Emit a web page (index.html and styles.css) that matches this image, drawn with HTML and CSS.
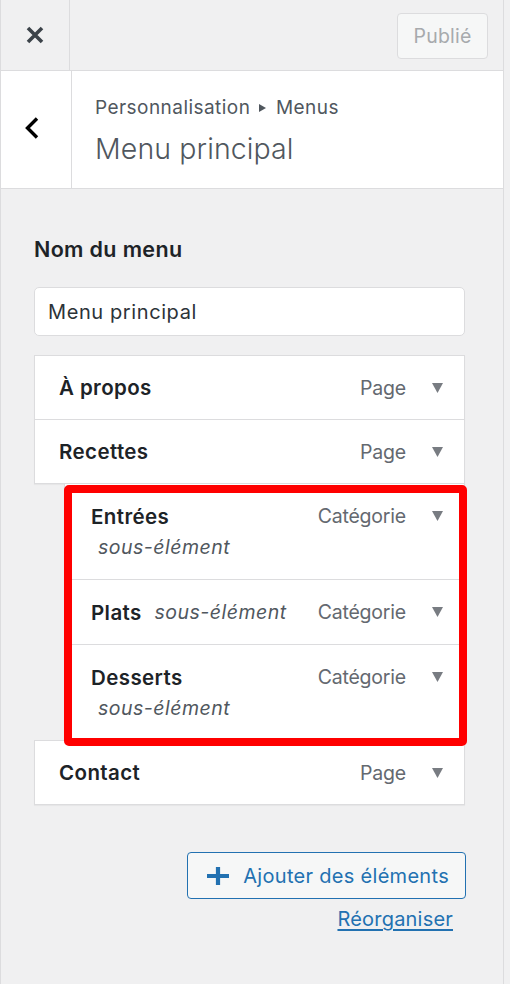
FILE: index.html
```html
<!DOCTYPE html>
<html lang="fr">
<head>
<meta charset="utf-8">
<title>Menu principal</title>
<link rel="stylesheet" href="styles.css">
</head>
<body>
<div class="panel">
  <div class="topbar">
    <button class="close" aria-label="Fermer">
      <svg width="18" height="18" viewBox="0 0 18 18"><path d="M2 2 L16 16 M16 2 L2 16" stroke="#3c434a" stroke-width="3.6" fill="none"/></svg>
    </button>
    <div class="spacer"></div>
    <button class="publish" disabled>Publié</button>
  </div>
  <div class="section-head">
    <button class="back" aria-label="Retour">
      <svg width="16" height="22" viewBox="0 0 16 22"><polyline points="13,1.5 3.5,11 13,20.5" stroke="#000" stroke-width="3.4" fill="none" stroke-linejoin="miter"/></svg>
    </button>
    <div class="titles">
      <div class="crumb">Personnalisation <svg class="crumb-arrow" width="7" height="8" viewBox="0 0 7 8"><path d="M0 0 L7 4 L0 8Z" fill="#50575e"/></svg> Menus</div>
      <h1 class="title">Menu principal</h1>
    </div>
  </div>
  <div class="content">
    <label class="label" for="menu-name">Nom du menu</label>
    <input id="menu-name" class="name-input" type="text" value="Menu principal">
    <ul class="menu-items">
      <li class="item">
        <span class="item-title">À propos</span>
        <span class="item-type">Page</span>
        <svg class="toggle" width="11" height="10" viewBox="0 0 11 10"><path d="M0 0 H11 L5.5 10Z" fill="#787c82"/></svg>
      </li>
      <li class="item">
        <span class="item-title">Recettes</span>
        <span class="item-type">Page</span>
        <svg class="toggle" width="11" height="10" viewBox="0 0 11 10"><path d="M0 0 H11 L5.5 10Z" fill="#787c82"/></svg>
      </li>
      <li class="sub-group">
        <ul class="sub-items">
          <li class="item sub">
            <span class="sub-text"><span class="item-title">Entrées</span> <em class="is-sub">sous-élément</em></span>
            <span class="item-type">Catégorie</span>
            <svg class="toggle" width="11" height="10" viewBox="0 0 11 10"><path d="M0 0 H11 L5.5 10Z" fill="#787c82"/></svg>
          </li>
          <li class="item sub">
            <span class="sub-text"><span class="item-title">Plats</span> <em class="is-sub">sous-élément</em></span>
            <span class="item-type">Catégorie</span>
            <svg class="toggle" width="11" height="10" viewBox="0 0 11 10"><path d="M0 0 H11 L5.5 10Z" fill="#787c82"/></svg>
          </li>
          <li class="item sub">
            <span class="sub-text"><span class="item-title">Desserts</span> <em class="is-sub">sous-élément</em></span>
            <span class="item-type">Catégorie</span>
            <svg class="toggle" width="11" height="10" viewBox="0 0 11 10"><path d="M0 0 H11 L5.5 10Z" fill="#787c82"/></svg>
          </li>
        </ul>
      </li>
      <li class="item">
        <span class="item-title">Contact</span>
        <span class="item-type">Page</span>
        <svg class="toggle" width="11" height="10" viewBox="0 0 11 10"><path d="M0 0 H11 L5.5 10Z" fill="#787c82"/></svg>
      </li>
    </ul>
    <div class="actions">
      <button class="add-btn">
        <svg width="22" height="18" viewBox="0 0 22 18"><path d="M0 9 H22 M11 0 V18" stroke="#2271b1" stroke-width="4.2" fill="none"/></svg>
        <span>Ajouter des éléments</span>
      </button>
      <a class="reorder" href="#">Réorganiser</a>
    </div>
  </div>
</div>
</body>
</html>
```

FILE: styles.css
```css
* { box-sizing: border-box; }

html, body {
  margin: 0;
  padding: 0;
  background: #f0f0f1;
  font-family: Inter, "Noto Sans", "DejaVu Sans", sans-serif;
  color: #1d2327;
}

.panel {
  width: 504px;
  min-height: 984px;
  background: #f0f0f1;
  border-left: 1px solid #dcdcde;
  border-right: 1px solid #dcdcde;
}

button {
  font-family: inherit;
  background: none;
  border: 0;
  padding: 0;
  margin: 0;
  cursor: pointer;
}

/* Top bar */
.topbar {
  display: flex;
  align-items: center;
  height: 71px;
  border-bottom: 1px solid #dcdcde;
}

.close {
  width: 70px;
  height: 70px;
  border-right: 1px solid #dcdcde;
  display: flex;
  align-items: center;
  justify-content: center;
  margin-left: -1px;
}

.spacer { flex: 1; }

.publish {
  width: 91px;
  height: 46px;
  margin-right: 15px;
  margin-top: 2px;
  background: #f6f7f7;
  border: 1px solid #dcdcde;
  border-radius: 4px;
  color: #a7aaad;
  font-size: 19.5px;
  letter-spacing: 0.2px;
}

/* Section head */
.section-head {
  display: flex;
  height: 118px;
  background: #fff;
  border-bottom: 1px solid #dcdcde;
}

.back {
  width: 71px;
  border-right: 1px solid #dcdcde;
  display: flex;
  align-items: center;
  justify-content: center;
  padding-right: 8px;
  padding-bottom: 4px;
}

.titles {
  display: flex;
  flex-direction: column;
  padding: 25px 0 0 23px;
}

.crumb {
  font-size: 19px;
  line-height: 24px;
  color: #50575e;
  letter-spacing: 0.45px;
}

.crumb-arrow {
  margin: 0 4px 2px 3px;
  vertical-align: middle;
}

.title {
  margin: 11px 0 0;
  font-size: 28.5px;
  line-height: 36px;
  font-weight: 300;
  color: #50575e;
  letter-spacing: 0.1px;
}

/* Content */
.content {
  padding: 45px 39px 0 33px;
  display: flex;
  flex-direction: column;
}

.label {
  font-size: 21.5px;
  line-height: 30px;
  font-weight: 600;
  color: #1d2327;
  letter-spacing: 0.35px;
}

.name-input {
  margin-top: 23px;
  width: 431px;
  height: 49px;
  border: 1px solid #dcdcde;
  border-radius: 5px;
  background: #fff;
  padding: 0 13px;
  font-family: inherit;
  font-size: 20px;
  color: #2c3338;
  letter-spacing: 0.6px;
  outline: none;
}

.menu-items {
  list-style: none;
  margin: 19px 0 0;
  padding: 0;
  width: 431px;
}

.sub-items {
  list-style: none;
  margin: 0;
  padding: 0;
}

.item {
  display: flex;
  align-items: center;
  height: 65px;
  margin-top: -1px;
  background: #fff;
  border: 1px solid #dcdcde;
  padding: 0 21px 0 24px;
  box-shadow: 0 1px 1px rgba(0, 0, 0, 0.04);
}

.menu-items > .item:first-child { margin-top: 0; }

.item-title {
  flex: 1;
  font-size: 20.5px;
  font-weight: 600;
  color: #1d2327;
  letter-spacing: 0.4px;
}

.item-type {
  font-size: 19.5px;
  color: #646970;
  letter-spacing: -0.2px;
  margin-right: 26px;
}

.toggle { flex: none; }

.sub-group {
  position: relative;
  margin-top: -1px;
  margin-left: 30px;
}

.sub-group::after {
  content: "";
  position: absolute;
  top: 2px;
  left: 0;
  right: -2px;
  bottom: -5px;
  border: 8px solid #ff0000;
  border-radius: 5px;
  pointer-events: none;
}

.item.sub {
  height: auto;
  align-items: flex-start;
  padding: 17px 21px 16px 26px;
}

.sub-group .item.sub:first-child { margin-top: 0; }

.sub-text {
  flex: 1;
  font-size: 20.5px;
  line-height: 31px;
  padding-right: 14px;
}

.sub-text .item-title { flex: none; }

.is-sub {
  display: inline-block;
  white-space: nowrap;
  font-size: 19.5px;
  line-height: 31px;
  vertical-align: top;
  font-style: italic;
  color: #50575e;
  margin-left: 7px;
  letter-spacing: 0.5px;
}

.item.sub .item-type { line-height: 31px; }

.item.sub .toggle { margin-top: 10px; }

/* Actions */
.actions {
  display: flex;
  flex-direction: column;
  align-items: flex-end;
  margin-top: 47px;
  width: 432px;
}

.add-btn {
  display: flex;
  align-items: center;
  height: 47px;
  padding: 0 16px 0 19px;
  background: #f6f7f7;
  border: 1px solid #2271b1;
  border-radius: 4px;
  color: #2271b1;
  font-size: 20px;
  letter-spacing: 0.3px;
}

.add-btn svg { margin-right: 14px; }

.reorder {
  margin-top: 6px;
  margin-right: 13px;
  font-size: 20px;
  line-height: 28px;
  color: #2271b1;
  letter-spacing: 0.2px;
  text-decoration: underline;
  text-underline-offset: 3px;
}
```
